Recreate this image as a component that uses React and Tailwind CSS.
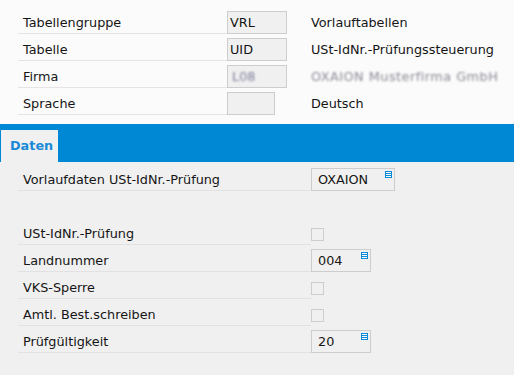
import React from "react";

const ListIcon = () => (
  <div className="absolute right-[2px] top-[2px] w-[7px] h-[7px] bg-[#0a8ad8] p-[1px] flex flex-col gap-[1px]">
    <div className="h-[1px] bg-white" />
    <div className="h-[1px] bg-white" />
    <div className="h-[1px] bg-white" />
  </div>
);

const headRows = [
  { label: "Tabellengruppe", value: "VRL", desc: "Vorlauftabellen" },
  { label: "Tabelle", value: "UID", desc: "USt-IdNr.-Prüfungssteuerung" },
  { label: "Firma", value: "L08", desc: "OXAION Musterfirma GmbH", blur: true },
  { label: "Sprache", value: "", desc: "Deutsch", narrow: true },
];

const HeadRow = ({ row }) => (
  <div className="flex h-[27px] items-end">
    <div className="w-[209px] h-[27px] border-b border-[#e4e4e4] pl-[5px] pt-[8px] leading-[15px]">
      {row.label}
    </div>
    <div className="w-[84px] h-[27px] flex items-end">
      <div
        className={`${row.narrow ? "w-[48px]" : "w-[60px]"} h-[23px] border border-[#cdcdcd] bg-[#f0f0f0] pl-[2px] pt-[3px] leading-[15px]`}
      >
        {row.blur ? (
          <span className="text-[#7d7f9a] blur-[1px] pl-[2px]">{row.value}</span>
        ) : (
          row.value
        )}
      </div>
    </div>
    <div className="h-[27px] pt-[8px] leading-[15px] whitespace-nowrap">
      {row.blur ? (
        <span className="text-[#8a8a96] blur-[1.2px] tracking-[0.5px]">{row.desc}</span>
      ) : (
        row.desc
      )}
    </div>
  </div>
);

const Row = ({ label, children, line = true }) => (
  <div className="flex h-[27px]">
    <div
      className={`w-[293px] h-[27px] pl-[5px] pt-[8px] leading-[15px] ${line ? "border-b border-[#e2e2e2]" : ""}`}
    >
      {label}
    </div>
    <div className="h-[27px] flex items-end">{children}</div>
  </div>
);

const Lookup = ({ value, wide }) => (
  <div
    className={`relative ${wide ? "w-[84px]" : "w-[60px]"} h-[23px] border border-[#cdcdcd] bg-[#f0f0f0] pl-[6px] pt-[3px] leading-[15px]`}
  >
    {value}
    <ListIcon />
  </div>
);

const Check = () => (
  <div className="w-[13px] h-[13px] border border-[#cdcdcd] bg-[#f0f0f0] mb-[4px]" />
);

export default function App() {
  return (
    <div
      className="w-[514px] h-[375px] overflow-hidden bg-[#f0f0f0] text-[12.8px] text-[#151515]"
      style={{ fontFamily: '"DejaVu Sans", Verdana, sans-serif' }}
    >
      <div className="h-[124px] bg-[#fbfbfb] pt-[7px] pl-[18px]">
        {headRows.map((r) => (
          <HeadRow key={r.label} row={r} />
        ))}
      </div>

      <div className="h-[38px] bg-[#0088d4] pl-[1px] flex items-end">
        <div className="w-[57px] h-[32px] bg-[#f0f0f0] pl-[9px] pt-[8px] leading-[15px] font-bold text-[#1a8ad6]">
          Daten
        </div>
      </div>

      <div className="pt-[2px] pl-[18px]">
        <Row label="Vorlaufdaten USt-IdNr.-Prüfung">
          <Lookup value="OXAION" wide />
        </Row>
        <Row label="" line={false} />
        <Row label="USt-IdNr.-Prüfung">
          <Check />
        </Row>
        <Row label="Landnummer">
          <Lookup value="004" />
        </Row>
        <Row label="VKS-Sperre">
          <Check />
        </Row>
        <Row label="Amtl. Best.schreiben">
          <Check />
        </Row>
        <Row label="Prüfgültigkeit">
          <Lookup value="20" />
        </Row>
      </div>
    </div>
  );
}
